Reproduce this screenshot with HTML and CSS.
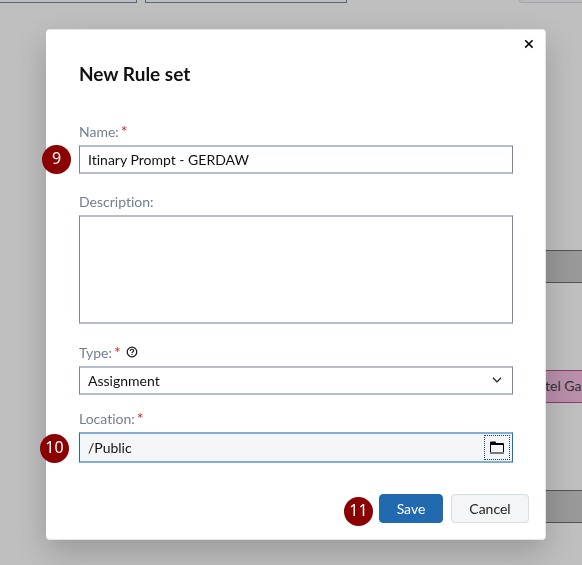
FILE: index.html
```html
<!DOCTYPE html>
<html lang="en">
<head>
<meta charset="utf-8">
<title>New Rule set</title>
<link rel="stylesheet" href="styles.css">
</head>
<body>
<div class="page">
  <div class="toolbar">
    <div class="toolbar-field first"></div>
    <div class="toolbar-field"></div>
    <div class="toolbar-button"></div>
  </div>
  <div class="nodes">
    <div class="node"></div>
    <div class="node pink">tel Ga</div>
    <div class="node"></div>
  </div>
</div>
<div class="overlay">
  <form class="dialog" role="dialog" aria-labelledby="dialog-title">
    <button class="close" type="button" aria-label="Close">
      <svg width="10" height="10" viewBox="0 0 10 10"><path d="M1.2 1.2 8.6 8.6M8.6 1.2 1.2 8.6" fill="none" stroke="#000" stroke-width="1.5"/></svg>
    </button>
    <h1 id="dialog-title">New Rule set</h1>
    <div class="fields">
      <div class="field">
        <label for="name">Name:<span class="required">*</span></label>
        <div class="control">
          <span class="step">9</span>
          <input id="name" type="text" value="Itinary Prompt - GERDAW">
        </div>
      </div>
      <div class="field">
        <label for="description">Description:</label>
        <textarea id="description"></textarea>
      </div>
      <div class="field">
        <div class="label-row">
          <label for="type">Type:<span class="required">*</span></label>
          <svg class="help" width="12" height="12" viewBox="0 0 12 12"><circle cx="6" cy="6" r="4.8" fill="none" stroke="#111" stroke-width="1.2"/><path d="M4.3 4.9C4.3 3.8 5 3.3 6 3.3S7.7 3.9 7.7 4.7C7.7 5.7 6 5.8 6 7.1M6 7.9V9" fill="none" stroke="#111" stroke-width="1.1"/></svg>
        </div>
        <div class="control">
          <select id="type"><option>Assignment</option></select>
          <svg class="chevron" width="10" height="6" viewBox="0 0 10 6"><path d="M1 .8 5 4.9 9 .8" fill="none" stroke="#222" stroke-width="1.3"/></svg>
        </div>
      </div>
      <div class="field location">
        <label for="location">Location:<span class="required">*</span></label>
        <div class="control picker">
          <span class="step wide">10</span>
          <input id="location" type="text" value="/Public">
          <button class="browse" type="button" aria-label="Browse">
            <svg width="14" height="13" viewBox="0 0 14 13"><path d="M0 12.5V1.5Q0 .5 1 .5H5Q6 .5 6 1.5V2H13Q14 2 14 3V12.5Z" fill="#000"/><path d="M1 4H13V11H1Z" fill="#f4f5f7"/><path d="M0 11H14V12.5H0Z" fill="#777"/></svg>
          </button>
        </div>
      </div>
    </div>
    <div class="actions">
      <span class="step inline">11</span>
      <button class="button primary" type="submit">Save</button>
      <button class="button" type="button">Cancel</button>
    </div>
  </form>
</div>
</body>
</html>
```
FILE: styles.css
```css
* {
  box-sizing: border-box;
}

body {
  margin: 0;
  overflow: hidden;
  background: #bfbfbf;
  color: #111;
  font: 14px/19px Lato, "Liberation Sans", sans-serif;
  font-variant-ligatures: none;
}

.page {
  min-height: 100vh;
}

.toolbar {
  display: flex;
  gap: 8px;
  height: 3px;
}

.toolbar-field {
  width: 202px;
  border: solid #5b6478;
  border-width: 0 1px 1px;
}

.toolbar-field.first {
  width: 137px;
  border-left: 0;
}

.toolbar-button {
  flex: 1;
  margin-left: 164px;
  border: solid #a3a5aa;
  border-width: 0 0 1px 1px;
  border-radius: 0 0 0 4px;
  background: #bababa;
}

.nodes {
  display: grid;
  gap: 87px;
  padding: 247px 0 0 545px;
}

.node {
  height: 33px;
  border: solid #555;
  border-width: 1px 0;
  background: #999;
  color: #333;
  line-height: 30px;
  white-space: nowrap;
}

.node.pink {
  border-color: #8c3d6b;
  background: #b98fa9;
}

.overlay {
  position: fixed;
  inset: 0;
  display: grid;
  align-items: start;
  padding: 29px 36px 0 46px;
}

.dialog {
  position: relative;
  padding: 32px 16px 13px 33px;
  border: 1px solid #e4e5e8;
  border-width: 1px 1px 1px 0;
  border-radius: 4px;
  background: #fff;
  box-shadow: 0 12px 32px rgba(0, 0, 0, 0.2);
}

.close {
  position: absolute;
  top: 5px;
  right: 7px;
  display: grid;
  place-items: center;
  width: 18px;
  height: 18px;
  padding: 0;
  border: 0;
  background: none;
}

h1 {
  margin: 0 0 36px;
  font-size: 19px;
  font-weight: 700;
  line-height: 24px;
}

.fields {
  display: grid;
  gap: 18px;
  margin-right: 16px;
}

.field {
  display: grid;
  gap: 4px;
}

.field.location {
  margin-top: -4px;
}

label {
  color: #737d92;
}

.required {
  margin-left: 2px;
  color: #e01b1b;
  font-size: 16px;
  line-height: 16px;
}

.label-row {
  display: flex;
  align-items: center;
  gap: 5px;
  height: 20px;
}

.control {
  position: relative;
  display: grid;
}

input,
textarea,
select {
  width: 100%;
  height: 29px;
  margin: 0;
  padding: 0 8px;
  border: solid #b7bdca;
  border-width: 2px 1px;
  border-left-color: #7b849b;
  border-right-color: #7b849b;
  border-radius: 0;
  outline: 0;
  background: #fff;
  color: #111;
  font: inherit;
  font-variant-ligatures: none;
}

textarea {
  display: block;
  height: 109px;
  resize: none;
}

select {
  appearance: none;
}

.chevron {
  position: absolute;
  top: 11px;
  right: 11px;
  pointer-events: none;
}

.picker {
  display: flex;
  align-items: center;
  height: 31px;
  padding-right: 2px;
  border: solid #84add6;
  border-width: 2px 1px;
  border-left-color: #216ab0;
  border-right-color: #216ab0;
  background: #f4f5f7;
}

.picker input {
  flex: 1;
  height: 27px;
  border: 0;
  background: none;
}

.browse {
  display: grid;
  place-items: center;
  width: 26px;
  height: 25px;
  padding: 0;
  border: 1px dotted #0b4579;
  background: none;
}

.step {
  position: absolute;
  top: 0;
  left: -37px;
  width: 29px;
  height: 29px;
  border-radius: 50%;
  background: #8b0000;
  color: #fff;
  font: 16px/27px "Noto Sans", sans-serif;
  text-align: center;
}

.step.wide {
  left: -40px;
}

.step.inline {
  position: static;
  margin-top: 3px;
}

.actions {
  display: flex;
  justify-content: flex-end;
  gap: 8px;
  margin-top: 31px;
}

.actions .step {
  margin-right: -2px;
}

.button {
  width: 78px;
  height: 29px;
  padding: 0;
  border: 1px solid #d9dce2;
  border-radius: 4px;
  background: #f4f5f7;
  color: #222;
  font: inherit;
}

.button.primary {
  width: 64px;
  border-color: #216ab0;
  background: #216ab0;
  color: #fff;
}
```
